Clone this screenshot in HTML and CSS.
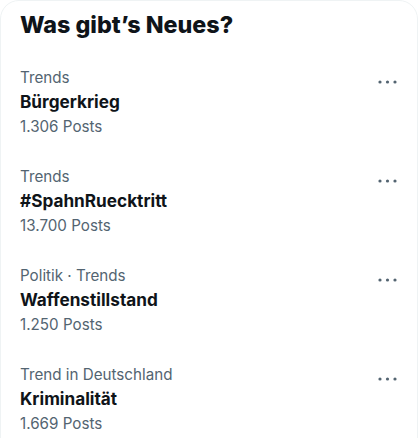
FILE: index.html
```html
<!DOCTYPE html>
<html lang="de">
<head>
    <meta charset="UTF-8">
    <meta name="viewport" content="width=device-width, initial-scale=1.0">
    <title>Was gibt's Neues?</title>
    <link rel="stylesheet" href="styles.css">
</head>
<body>
    <section class="trends">
        <h2 class="trends-title">Was gibt’s Neues?</h2>

        <div class="trend">
            <div class="trend-text">
                <div class="trend-meta">Trends</div>
                <div class="trend-name">Bürgerkrieg</div>
                <div class="trend-count">1.306 Posts</div>
            </div>
            <button class="more" type="button" aria-label="Mehr">
                <svg viewBox="0 0 20 6" width="20" height="6"><circle cx="3" cy="3" r="1.6"/><circle cx="10.5" cy="3" r="1.6"/><circle cx="18" cy="3" r="1.6"/></svg>
            </button>
        </div>

        <div class="trend">
            <div class="trend-text">
                <div class="trend-meta">Trends</div>
                <div class="trend-name">#SpahnRuecktritt</div>
                <div class="trend-count">13.700 Posts</div>
            </div>
            <button class="more" type="button" aria-label="Mehr">
                <svg viewBox="0 0 20 6" width="20" height="6"><circle cx="3" cy="3" r="1.6"/><circle cx="10.5" cy="3" r="1.6"/><circle cx="18" cy="3" r="1.6"/></svg>
            </button>
        </div>

        <div class="trend">
            <div class="trend-text">
                <div class="trend-meta">Politik · Trends</div>
                <div class="trend-name">Waffenstillstand</div>
                <div class="trend-count">1.250 Posts</div>
            </div>
            <button class="more" type="button" aria-label="Mehr">
                <svg viewBox="0 0 20 6" width="20" height="6"><circle cx="3" cy="3" r="1.6"/><circle cx="10.5" cy="3" r="1.6"/><circle cx="18" cy="3" r="1.6"/></svg>
            </button>
        </div>

        <div class="trend">
            <div class="trend-text">
                <div class="trend-meta">Trend in Deutschland</div>
                <div class="trend-name">Kriminalität</div>
                <div class="trend-count">1.669 Posts</div>
            </div>
            <button class="more" type="button" aria-label="Mehr">
                <svg viewBox="0 0 20 6" width="20" height="6"><circle cx="3" cy="3" r="1.6"/><circle cx="10.5" cy="3" r="1.6"/><circle cx="18" cy="3" r="1.6"/></svg>
            </button>
        </div>
    </section>
</body>
</html>
```

FILE: styles.css
```css
* {
    margin: 0;
    padding: 0;
    box-sizing: border-box;
}

body {
    font-family: 'Inter', 'Liberation Sans', sans-serif;
    background: #ffffff;
    color: #0f1419;
}

.trends {
    width: 418px;
    border: 1px solid #eff3f4;
    border-radius: 19px;
    padding-bottom: 20px;
}

.trends-title {
    font-size: 23.3px;
    font-weight: 800;
    line-height: 29px;
    padding: 9px 19px 14px;
    color: #0f1419;
}

.trend {
    display: flex;
    justify-content: space-between;
    align-items: flex-start;
    padding: 12px 20px 12px 19px;
}

.trend-meta {
    font-size: 15.2px;
    line-height: 25px;
    color: #536471;
}

.trend-count {
    font-size: 15.2px;
    line-height: 26px;
    color: #536471;
}

.trend-name {
    font-size: 17.2px;
    font-weight: 700;
    line-height: 24px;
    color: #0f1419;
}

.more {
    border: none;
    background: none;
    padding: 0;
    margin-top: 14px;
    display: flex;
}

.more svg {
    fill: #536471;
}
```
